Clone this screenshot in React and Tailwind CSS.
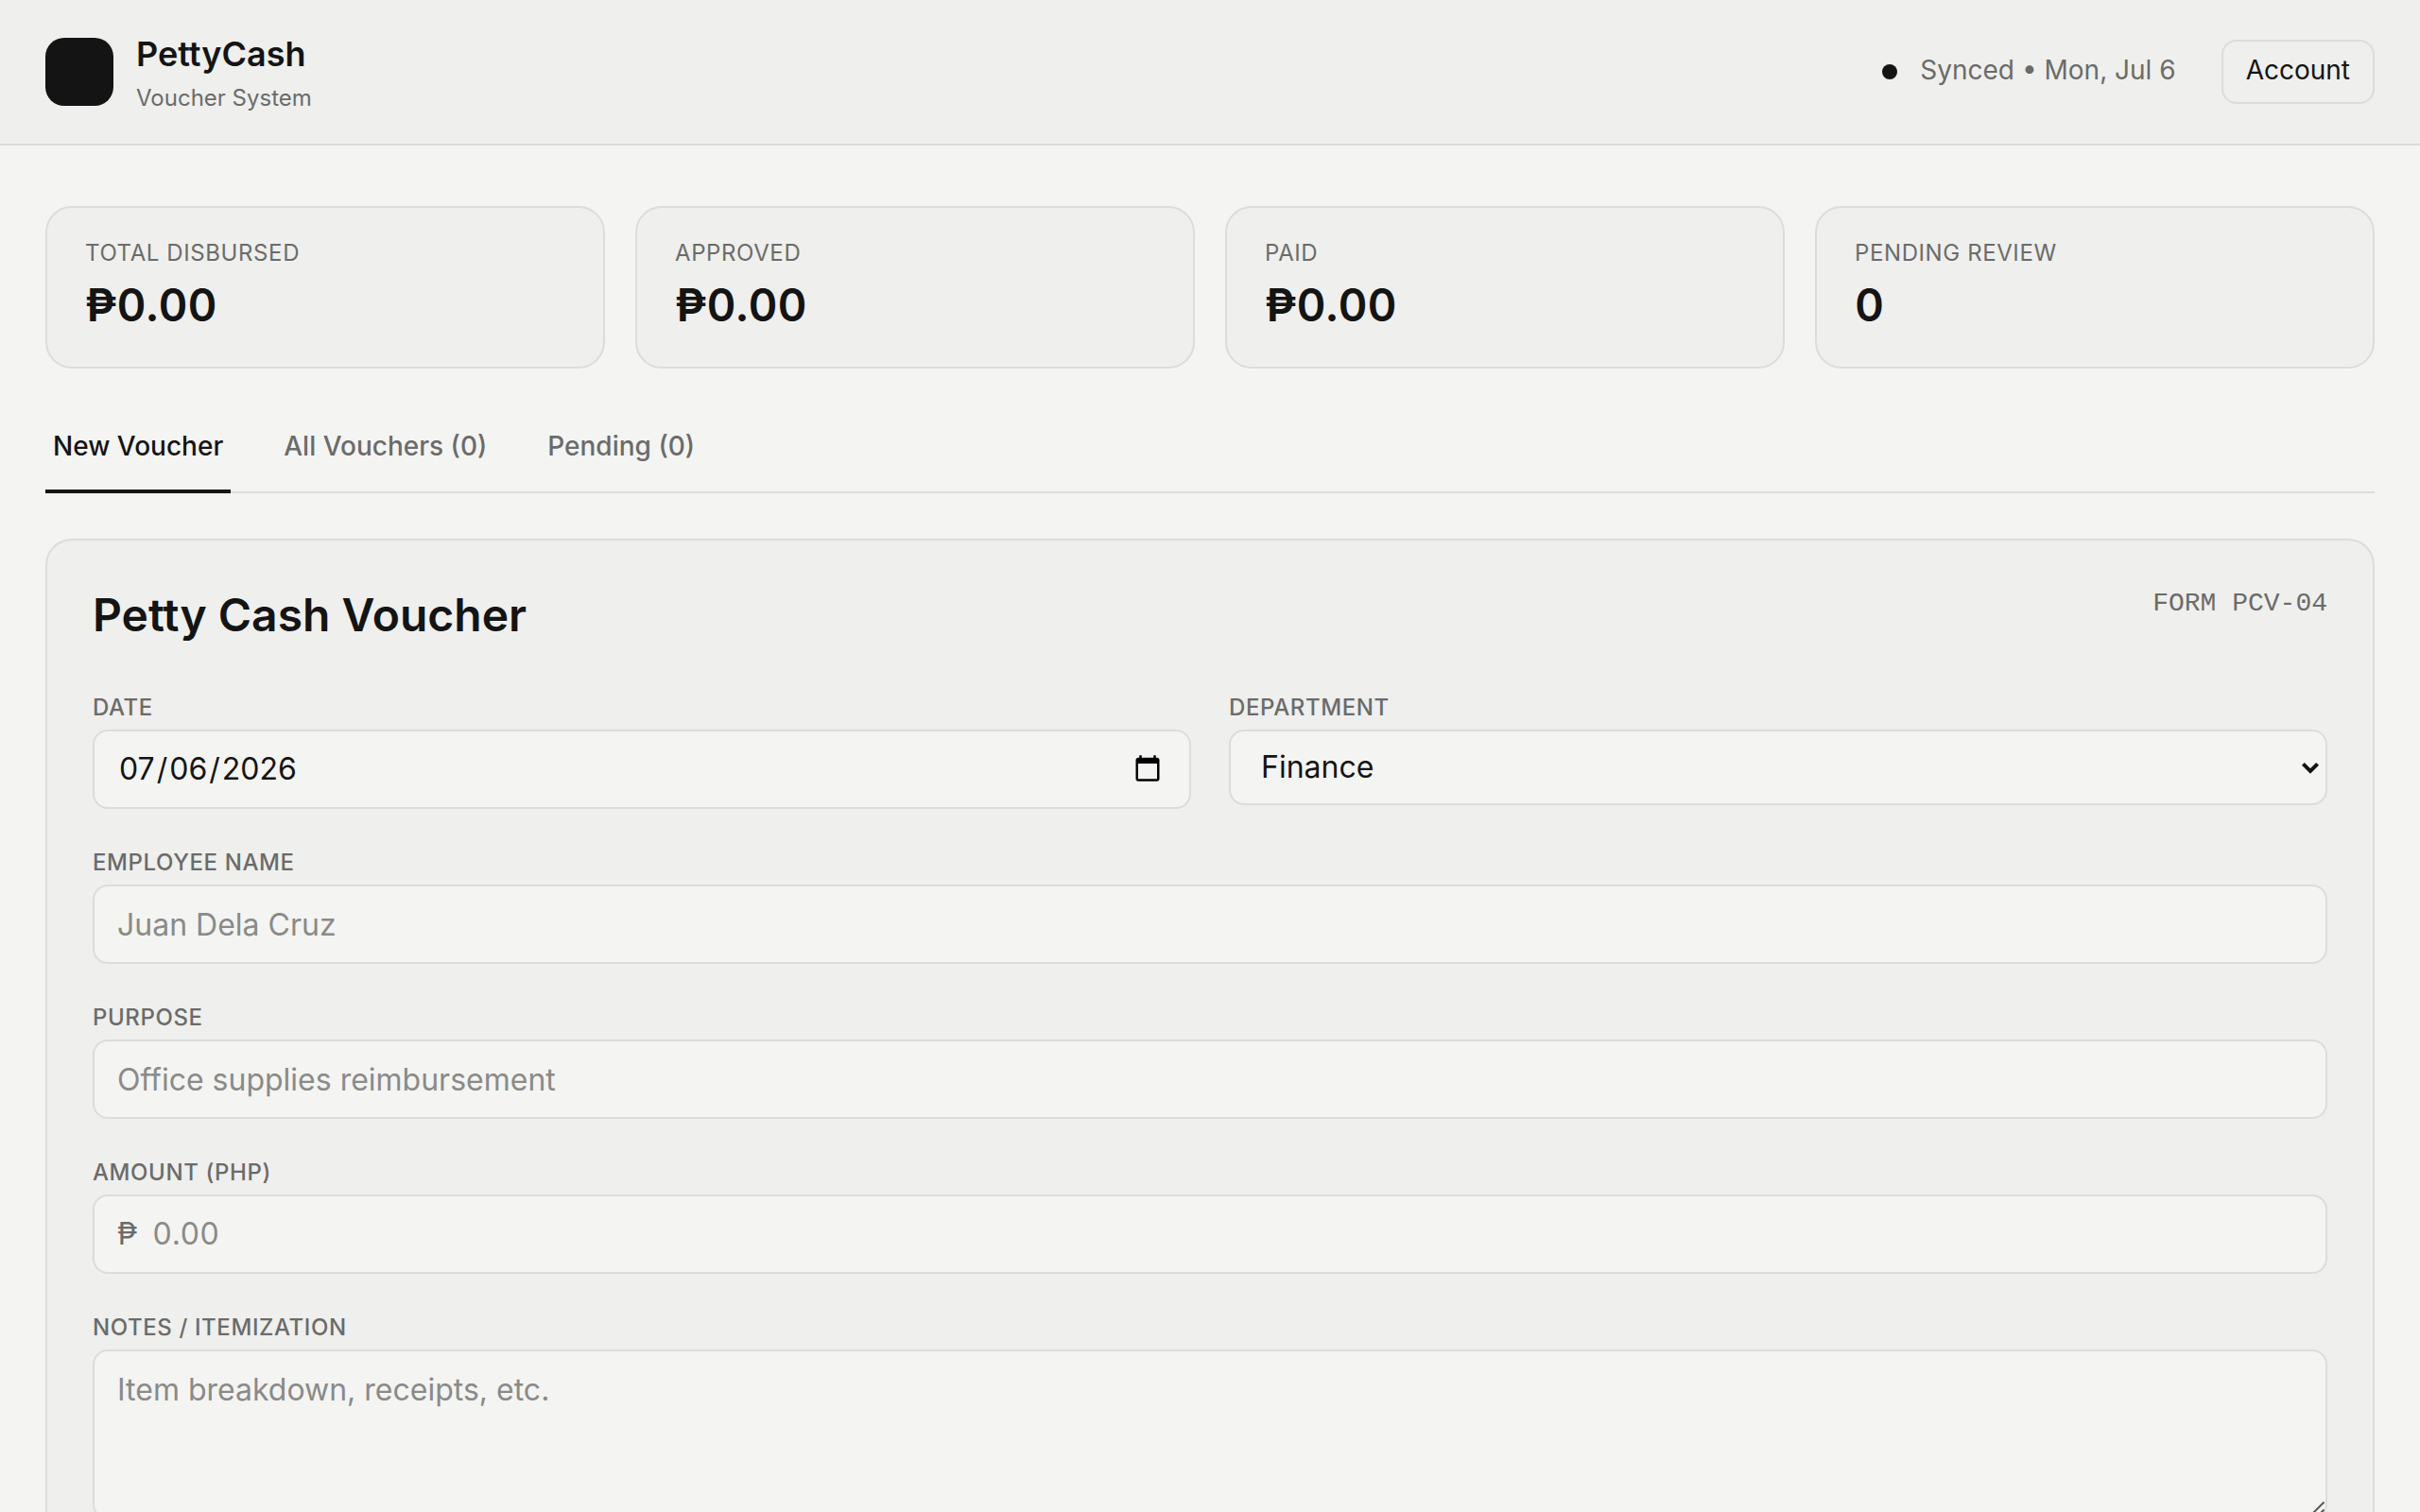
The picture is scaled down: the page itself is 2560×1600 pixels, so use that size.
import { useState } from "react";

const stats = [
  { label: "Total Disbursed", value: "₱0.00" },
  { label: "Approved", value: "₱0.00" },
  { label: "Paid", value: "₱0.00" },
  { label: "Pending Review", value: "0" },
];

const tabs = [
  { id: "new", label: "New Voucher" },
  { id: "all", label: "All Vouchers (0)" },
  { id: "pending", label: "Pending (0)" },
];

const departments = ["Finance", "Operations", "Human Resources", "Marketing", "IT"];

const labelClass =
  "block mb-1 text-2xl leading-[38px] font-medium uppercase tracking-wide text-[#6b6b69]";

const fieldClass =
  "block w-full h-[84px] px-6 rounded-2xl border-2 border-[#dcdcda] bg-[#f4f4f2] text-[32px] text-[#141414] placeholder:text-[#8a8a88] outline-none focus:border-[#141414]";

// extra room around the parts of the native date field
const dateClass =
  "[&::-webkit-datetime-edit-month-field]:px-[2px] [&::-webkit-datetime-edit-day-field]:px-[2px] [&::-webkit-datetime-edit-year-field]:px-[2px] [&::-webkit-calendar-picker-indicator]:mr-[2px]";

const App = () => {
  const [activeTab, setActiveTab] = useState("new");
  const [formData, setFormData] = useState({
    date: "2026-07-06",
    department: "Finance",
    employee: "",
    purpose: "",
    amount: "",
    notes: "",
  });

  const handleChange = (e) => {
    setFormData({
      ...formData,
      [e.target.name]: e.target.value,
    });
  };

  return (
    <div className="min-h-screen bg-[#f4f4f2] text-[#141414] font-['Inter',sans-serif]">
      {/* HEADER */}
      <header className="flex items-center justify-between px-12 py-[29px] bg-[#efefed] border-b-2 border-[#dcdcda]">
        <div className="flex items-center gap-6">
          <div className="w-[72px] h-[72px] rounded-[20px] bg-[#141414]" />
          <div>
            <h1 className="text-4xl leading-[56px] font-semibold">PettyCash</h1>
            <p className="text-2xl leading-[38px] text-[#6b6b69]">Voucher System</p>
          </div>
        </div>

        <div className="flex items-center gap-12">
          <div className="flex items-center gap-6 text-[28px] leading-[44px] text-[#6b6b69]">
            <span className="w-4 h-4 rounded-full bg-[#141414]" />
            <span className="pb-1">Synced • Mon, Jul 6</span>
          </div>
          <button
            type="button"
            className="px-6 pt-2 pb-3 rounded-2xl border-2 border-[#dcdcda] text-[28px] leading-[44px]"
          >
            Account
          </button>
        </div>
      </header>

      <main className="px-12 pt-16 pb-24">
        {/* STATS */}
        <section className="grid grid-cols-4 gap-8">
          {stats.map((stat) => (
            <div
              key={stat.label}
              className="px-10 pt-7 pb-[30px] rounded-[28px] border-2 border-[#dcdcda] bg-[#efefed]"
            >
              <p className="text-2xl leading-[40px] uppercase tracking-wide text-[#6b6b69]">
                {stat.label}
              </p>
              <p className="text-5xl leading-[70px] font-semibold tabular-nums">
                {stat.value}
              </p>
            </div>
          ))}
        </section>

        {/* TABS */}
        <nav className="flex gap-12 mt-9 border-b-2 border-[#dcdcda]">
          {tabs.map((tab) => (
            <button
              key={tab.id}
              type="button"
              onClick={() => setActiveTab(tab.id)}
              className={`-mb-[2px] px-2 py-6 border-b-4 text-[28px] leading-[44px] font-medium ${
                activeTab === tab.id
                  ? "border-[#141414] text-[#141414]"
                  : "border-transparent text-[#6b6b69]"
              }`}
            >
              {tab.label}
            </button>
          ))}
        </nav>

        {/* VOUCHER FORM */}
        <form className="mt-12 p-12 rounded-[28px] border-2 border-[#dcdcda] bg-[#efefed]">
          <div className="flex items-start justify-between mb-12">
            <h2 className="text-5xl leading-[62px] font-semibold">Petty Cash Voucher</h2>
            <span className="font-['Liberation_Mono',monospace] text-[28px] leading-[38px] text-[#6b6b69]">
              FORM PCV-04
            </span>
          </div>

          <div className="space-y-[38px]">
            <div className="grid grid-cols-2 gap-10">
              <div>
                <label htmlFor="date" className={labelClass}>Date</label>
                <input
                  id="date"
                  type="date"
                  name="date"
                  value={formData.date}
                  onChange={handleChange}
                  className={`${fieldClass} ${dateClass}`}
                />
              </div>

              <div>
                <label htmlFor="department" className={labelClass}>Department</label>
                <div className="relative">
                  <select
                    id="department"
                    name="department"
                    value={formData.department}
                    onChange={handleChange}
                    className="block w-full h-20 px-8 appearance-none rounded-2xl border-2 border-[#dcdcda] bg-[#f4f4f2] text-[32px] text-[#141414] outline-none focus:border-[#141414]"
                  >
                    {departments.map((name) => (
                      <option key={name}>{name}</option>
                    ))}
                  </select>
                  <svg
                    className="absolute right-2 top-[34px] pointer-events-none"
                    width="20"
                    height="14"
                    viewBox="0 0 20 14"
                    fill="none"
                    stroke="#141414"
                    strokeWidth="4"
                  >
                    <path d="M2.4 2.4 L10 10 L17.6 2.4" />
                  </svg>
                </div>
              </div>
            </div>

            <div>
              <label htmlFor="employee" className={labelClass}>Employee Name</label>
              <input
                id="employee"
                type="text"
                name="employee"
                placeholder="Juan Dela Cruz"
                value={formData.employee}
                onChange={handleChange}
                className={fieldClass}
              />
            </div>

            <div>
              <label htmlFor="purpose" className={labelClass}>Purpose</label>
              <input
                id="purpose"
                type="text"
                name="purpose"
                placeholder="Office supplies reimbursement"
                value={formData.purpose}
                onChange={handleChange}
                className={fieldClass}
              />
            </div>

            <div>
              <label htmlFor="amount" className={labelClass}>Amount (PHP)</label>
              <div className="flex items-center gap-4 h-[84px] px-6 rounded-2xl border-2 border-[#dcdcda] bg-[#f4f4f2] text-[32px] focus-within:border-[#141414]">
                <span className="text-[#6b6b69]">₱</span>
                <input
                  id="amount"
                  type="text"
                  inputMode="decimal"
                  name="amount"
                  placeholder="0.00"
                  value={formData.amount}
                  onChange={handleChange}
                  className="flex-1 tabular-nums outline-none placeholder:text-[#8a8a88]"
                />
              </div>
            </div>

            <div>
              <label htmlFor="notes" className={labelClass}>Notes / Itemization</label>
              <div className="relative">
                <textarea
                  id="notes"
                  name="notes"
                  placeholder="Item breakdown, receipts, etc."
                  value={formData.notes}
                  onChange={handleChange}
                  className="block w-full h-[180px] px-6 py-4 resize-none rounded-2xl border-2 border-[#dcdcda] bg-[#f4f4f2] text-[32px] leading-[50px] placeholder:text-[#8a8a88] outline-none focus:border-[#141414]"
                />
                <svg
                  className="absolute right-[2px] bottom-[2px] pointer-events-none"
                  width="18"
                  height="18"
                  viewBox="0 0 18 18"
                  stroke="#5a5a58"
                  strokeWidth="2"
                >
                  <path d="M16.5 1.5 L1.5 16.5 M16.5 9.5 L9.5 16.5" />
                </svg>
              </div>
            </div>
          </div>
        </form>
      </main>
    </div>
  );
};

export default App;
